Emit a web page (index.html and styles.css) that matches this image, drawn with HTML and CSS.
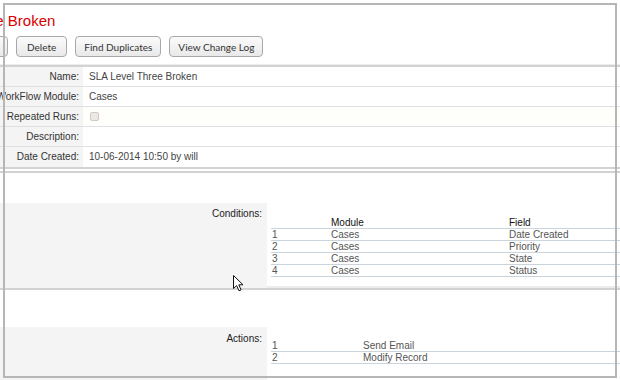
FILE: index.html
```html
<!DOCTYPE html>
<html lang="en">
<head>
    <meta charset="UTF-8">
    <title>SLA Level Three Broken</title>
    <link rel="stylesheet" href="styles.css">
</head>
<body>

    <div class="page">
        <!-- Record title -->
        <h2 class="title">SLA Level Three Broken</h2>

        <!-- Action buttons -->
        <div class="buttons">
            <button class="btn">Duplicate</button>
            <button class="btn btn-wide">Delete</button>
            <button class="btn">Find Duplicates</button>
            <button class="btn">View Change Log</button>
        </div>

        <!-- Overview -->
        <div class="panel detail">
            <div class="row"><div class="label">Name:</div><div class="value">SLA Level Three Broken</div></div>
            <div class="row"><div class="label">WorkFlow Module:</div><div class="value">Cases</div></div>
            <div class="row hl"><div class="label">Repeated Runs:</div><div class="value"><span class="check"></span></div></div>
            <div class="row"><div class="label">Description:</div><div class="value"></div></div>
            <div class="row"><div class="label">Date Created:</div><div class="value">10-06-2014 10:50 by will</div></div>
        </div>

        <!-- Conditions -->
        <div class="panel block cond-panel">
            <div class="panel-head"></div>
            <div class="panel-row cond-row">
                <div class="side">Conditions:</div>
                <div class="content">
                    <table class="list conditions">
                        <tr><th></th><th>Module</th><th>Field</th></tr>
                        <tr><td>1</td><td>Cases</td><td>Date Created</td></tr>
                        <tr><td>2</td><td>Cases</td><td>Priority</td></tr>
                        <tr><td>3</td><td>Cases</td><td>State</td></tr>
                        <tr><td>4</td><td>Cases</td><td>Status</td></tr>
                    </table>
                </div>
            </div>
        </div>

        <!-- Actions -->
        <div class="panel block act-panel">
            <div class="panel-head tall"></div>
            <div class="panel-row act-row">
                <div class="side">Actions:</div>
                <div class="content">
                    <table class="list actions">
                        <tr><td>1</td><td>Send Email</td></tr>
                        <tr><td>2</td><td>Modify Record</td></tr>
                    </table>
                </div>
            </div>
        </div>
    </div>

    <!-- screenshot frame and pointer -->
    <div class="frame"></div>
    <svg class="cursor" width="12" height="17" viewBox="0 0 12 17">
        <path d="M0.5 0.5 L0.5 13.5 L3.6 10.6 L6 15.8 L8.1 14.9 L5.8 9.8 L10 9.8 Z" fill="#fff" stroke="#111" stroke-width="1"/>
    </svg>

</body>
</html>
```

FILE: styles.css
```css
* {
    margin: 0;
    padding: 0;
    box-sizing: border-box;
}

body {
    width: 620px;
    height: 380px;
    overflow: hidden;
    background: #fff;
    font-family: "Liberation Sans", Arial, sans-serif;
    font-size: 10px;
    color: #333;
    position: relative;
}

/* Title */
.title {
    margin: 11px 0 0 -107px;
    font-size: 15px;
    font-weight: normal;
    line-height: 20px;
    color: #d90000;
    white-space: nowrap;
}

/* Buttons */
.buttons {
    display: flex;
    gap: 8px;
    margin: 5px 0 0 -52px;
    height: 21px;
}

.btn {
    font-family: Lato, "Open Sans", sans-serif;
    font-size: 10px;
    color: #333;
    padding: 0 8px;
    height: 21px;
    border: 1px solid #a8a8a8;
    border-radius: 4px;
    background: linear-gradient(#fbfbfb, #e9e9e9);
    white-space: nowrap;
}

.btn-wide {
    padding: 0 10px;
}

/* Panels */
.panel {
    border-top: 2px solid #d2d2d2;
    border-bottom: 2px solid #d2d2d2;
}

.detail {
    margin-top: 8px;
    box-shadow: 0 -1px 0 #ececec;
}

.row {
    display: grid;
    grid-template-columns: 83px 1fr;
    height: 20px;
    line-height: 19px;
    border-bottom: 1px solid #dde1e6;
}

.row:last-child {
    border-bottom: none;
}

.row.hl .value {
    background: #fefefa;
}

.label {
    display: flex;
    justify-content: flex-end;
    padding-right: 4px;
    background: #f4f4f4;
    white-space: nowrap;
    color: #333;
}

.value {
    padding-left: 6px;
    color: #444;
}

.check {
    display: inline-block;
    width: 9px;
    height: 9px;
    margin: 5px 0 0 1px;
    vertical-align: top;
    border: 1px solid #cfcac6;
    border-radius: 2px;
    background: #ebe8e5;
}

/* Conditions / Actions blocks */
.block {
    margin-top: 2px;
}

.cond-panel {
    margin-top: 2px;
    border-bottom: none;
}

.act-panel {
    margin-top: 0;
    border-top: 2px solid #d2d2d2;
    box-shadow: 0 -2px 0 #ececec;
    border-bottom: none;
}

.panel-head {
    height: 30px;
}

.panel-head.tall {
    height: 37px;
}

.panel-row {
    display: grid;
    grid-template-columns: 267px 1fr;
}

.cond-row {
    height: 85px;
}

.act-row {
    height: 60px;
}

.side {
    background: #f4f4f4;
    text-align: right;
    padding: 5px 5px 0 0;
    line-height: 12px;
    color: #222;
}

.act-row .side {
    padding-top: 6px;
}

.content {
    padding-left: 4px;
}

.list {
    border-collapse: collapse;
    width: 420px;
    margin-top: 14px;
    line-height: 11px;
    color: #555;
}

.list.actions {
    margin-top: 13px;
}

.list th {
    font-weight: normal;
    text-align: left;
    color: #111;
}

.list td,
.list th {
    padding: 0 0 0 1px;
    border-bottom: 1px solid #cbd3db;
    white-space: nowrap;
}

.conditions td:first-child,
.conditions th:first-child {
    width: 59px;
}

.conditions td:nth-child(2),
.conditions th:nth-child(2) {
    width: 178px;
}

.actions td:first-child {
    width: 91px;
}

/* Screenshot frame drawn over the page */
.frame {
    position: absolute;
    left: 3px;
    top: 3px;
    width: 614px;
    height: 375px;
    border: 2px solid #b6b6b6;
    pointer-events: none;
}

.cursor {
    position: absolute;
    left: 233px;
    top: 275px;
}
```
